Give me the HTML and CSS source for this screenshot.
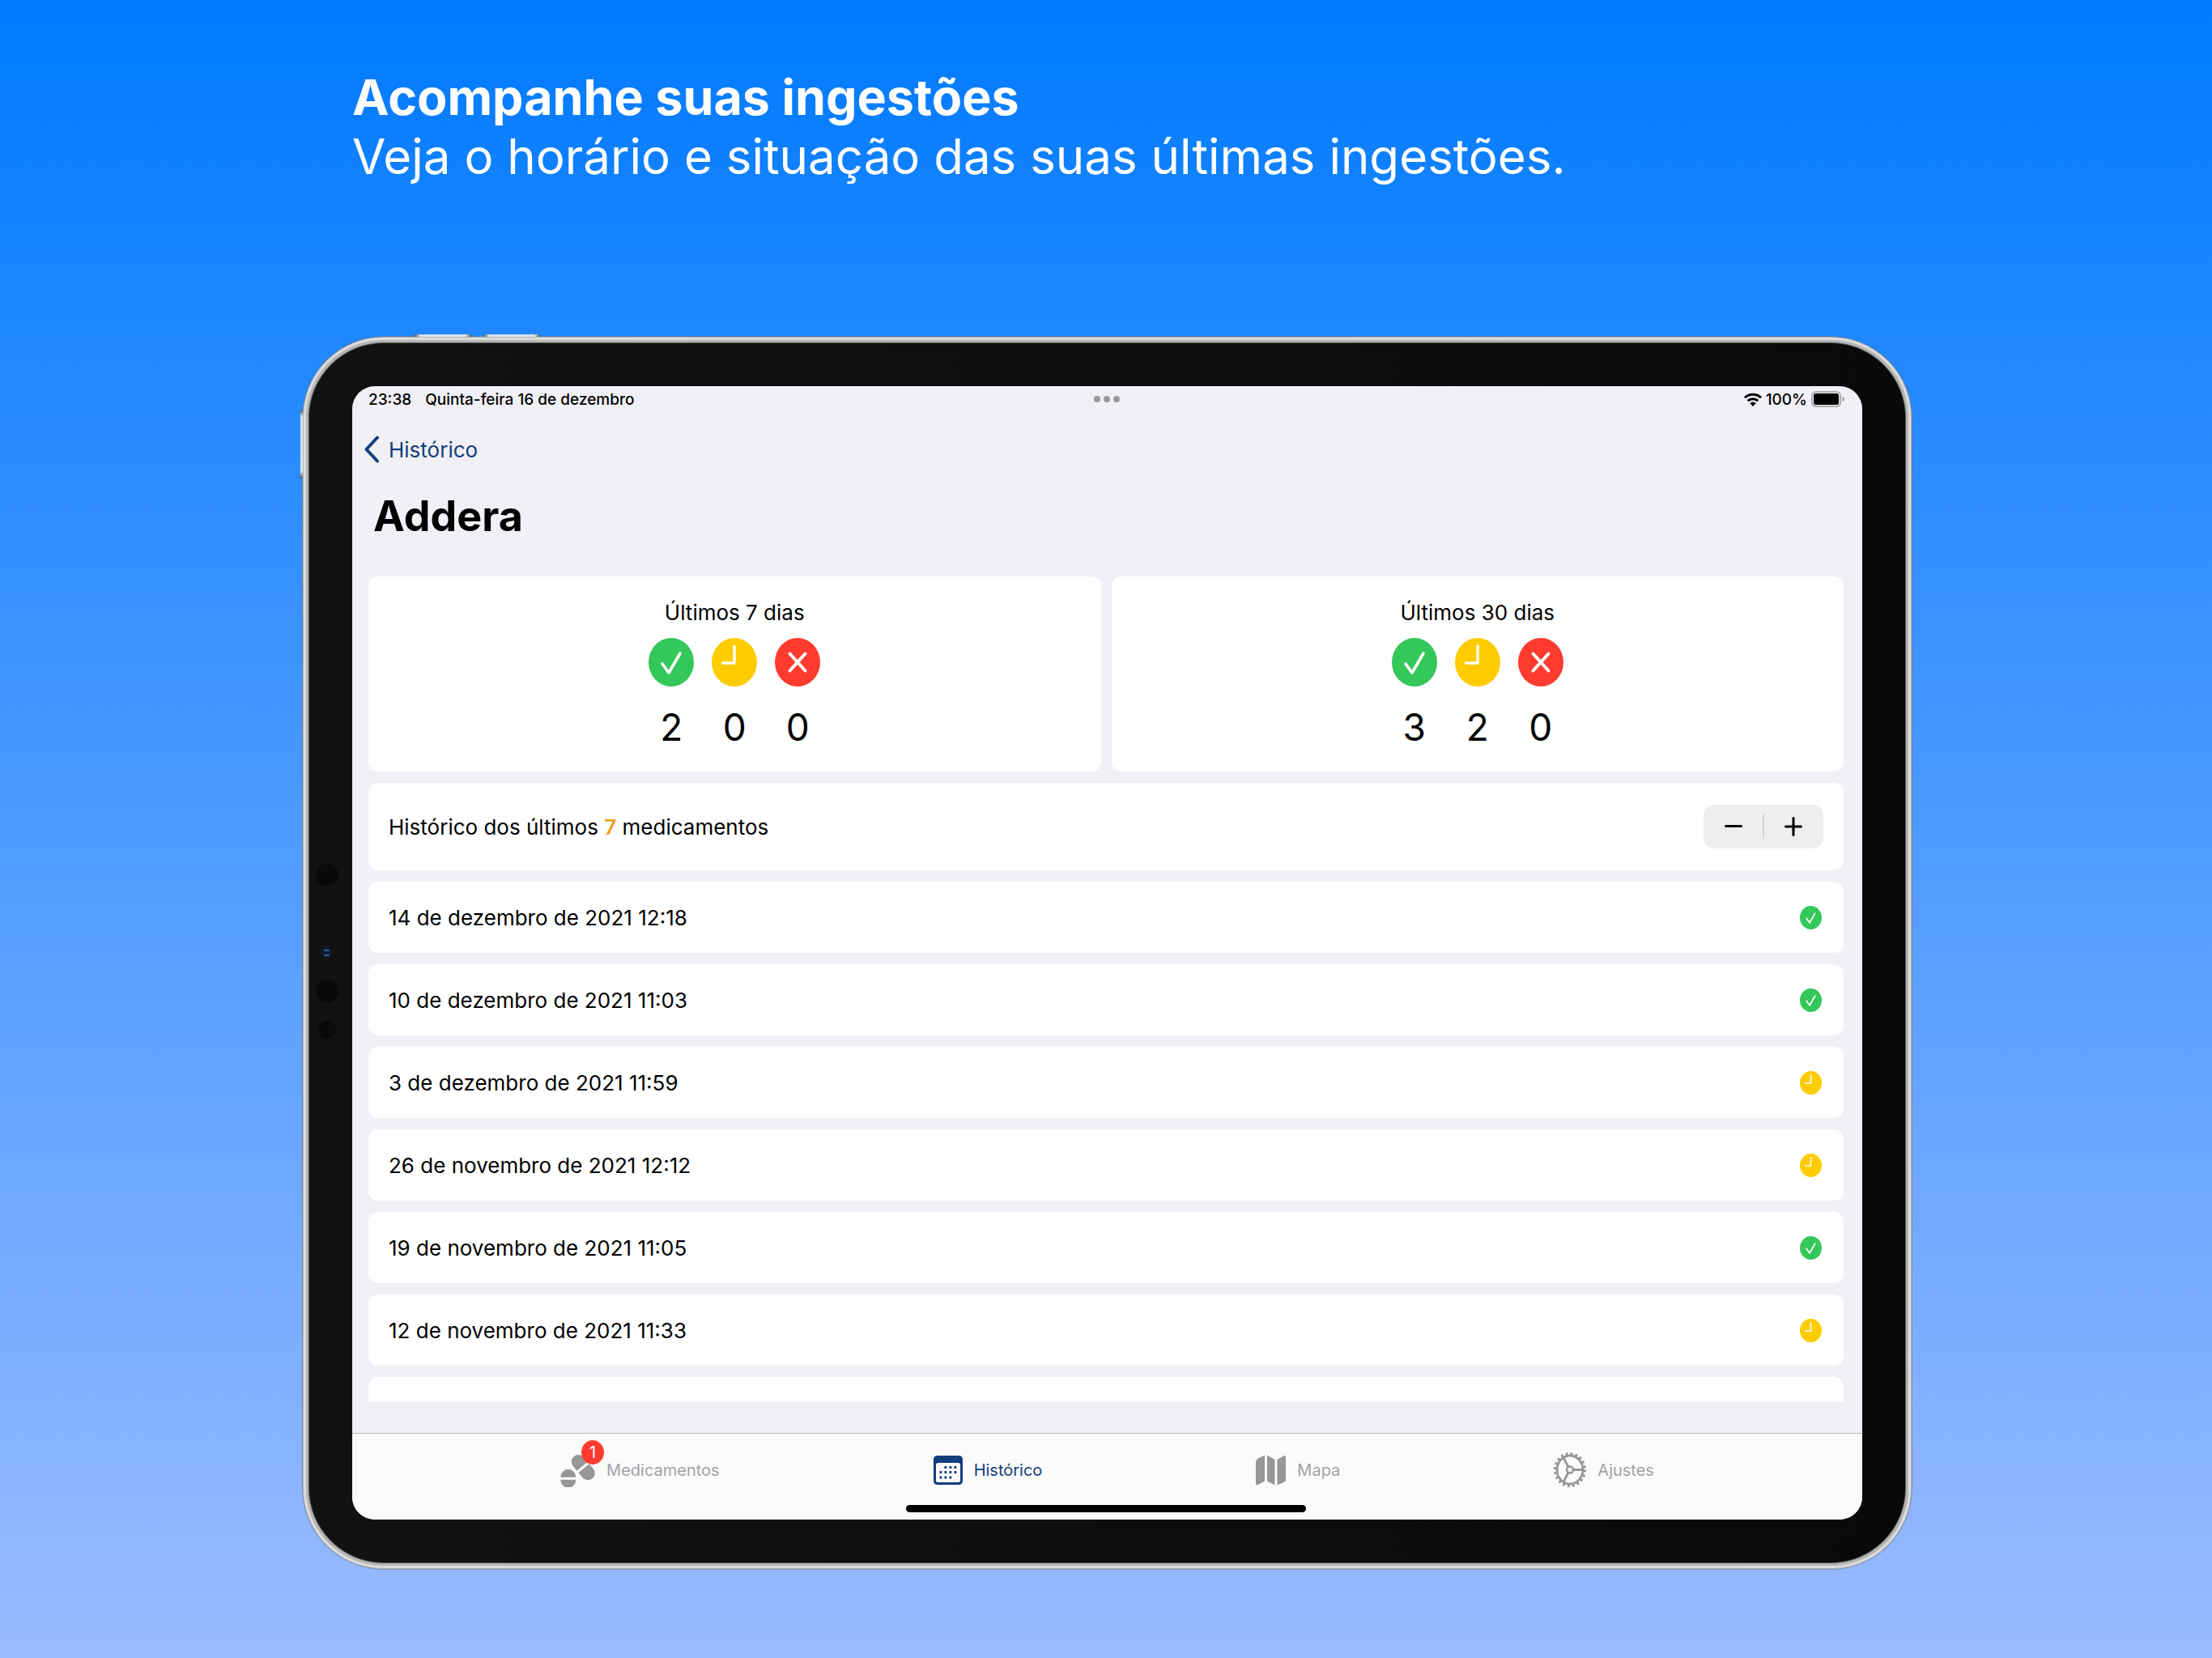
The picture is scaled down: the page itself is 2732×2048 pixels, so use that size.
FILE: index.html
```html
<!DOCTYPE html>
<html lang="pt-BR">
<head>
<meta charset="utf-8">
<meta name="viewport" content="width=device-width, initial-scale=1">
<title>Acompanhe suas ingestões</title>
<link rel="stylesheet" href="styles.css">
</head>
<body>
<svg class="sprite" aria-hidden="true">
  <symbol id="ok" viewBox="0 0 56 60" preserveAspectRatio="none">
    <ellipse cx="28" cy="30" rx="28" ry="30" fill="#34c759"/>
    <path d="M17 32 25 43 39 19" fill="none" stroke="#fff" stroke-width="3.6" stroke-linecap="round" stroke-linejoin="round"/>
  </symbol>
  <symbol id="late" viewBox="0 0 56 60" preserveAspectRatio="none">
    <ellipse cx="28" cy="30" rx="28" ry="30" fill="#ffcc00"/>
    <path d="M28 10V31H13.500" fill="none" stroke="#fff" stroke-width="3.4" stroke-linecap="round" stroke-linejoin="round"/>
  </symbol>
  <symbol id="missed" viewBox="0 0 56 60" preserveAspectRatio="none">
    <ellipse cx="28" cy="30" rx="28" ry="30" fill="#ff3b30"/>
    <path d="M18.500 19.500 37.500 40.500M37.500 19.500 18.500 40.500" fill="none" stroke="#fff" stroke-width="4" stroke-linecap="round"/>
  </symbol>
</svg>
<main class="page">
  <header class="promo">
    <h1>Acompanhe suas ingestões</h1>
    <p>Veja o horário e situação das suas últimas ingestões.</p>
  </header>

  <section class="device">
    <i class="key key-up"></i><i class="key key-down"></i><i class="key key-power"></i>
    <i class="lens lens-a"></i><i class="lens lens-b"></i><i class="lens lens-c"></i><i class="lens lens-d"></i>
    <div class="screen">
      <div class="status">
        <div class="status-left"><span>23:38</span><span>Quinta-feira 16 de dezembro</span></div>
        <div class="dots"><i></i><i></i><i></i></div>
        <div class="status-right">
          <svg width="22" height="17" viewBox="0 0 22 17" aria-hidden="true"><g fill="none" stroke="#000" stroke-width="3"><path d="M1 6.200A14.500 14.500 0 0 1 21 6.200"/><path d="M4.700 10.200A9.200 9.200 0 0 1 17.300 10.200"/></g><path d="M7.200 12.900A5.500 5.500 0 0 1 14.800 12.900L11 17Z"/></svg>
          <span>100%</span>
          <svg width="42" height="20" viewBox="0 0 42 20" aria-hidden="true"><rect x="1" y="1" width="35" height="18" rx="4.500" fill="none" stroke="#9b9b9f" stroke-width="1.600"/><rect x="3" y="3" width="31" height="14" rx="2.500"/><path d="M38.500 6.500Q41 8 41 10T38.500 13.500Z" fill="#9b9b9f"/></svg>
        </div>
      </div>

      <a class="back" href="#historico">
        <svg width="18" height="34" viewBox="0 0 18 34" aria-hidden="true"><path d="M16 2.500 2.500 17 16 31.500" fill="none" stroke="currentColor" stroke-width="4" stroke-linecap="round" stroke-linejoin="round"/></svg>
        <span>Histórico</span>
      </a>
      <h2 class="title">Addera</h2>

      <div class="content">
        <div class="stats">
          <section class="card stat">
            <h3>Últimos 7 dias</h3>
            <div class="counts">
              <div><svg class="big"><use href="#ok"/></svg><b>2</b></div>
              <div><svg class="big"><use href="#late"/></svg><b>0</b></div>
              <div><svg class="big"><use href="#missed"/></svg><b>0</b></div>
            </div>
          </section>
          <section class="card stat">
            <h3>Últimos 30 dias</h3>
            <div class="counts">
              <div><svg class="big"><use href="#ok"/></svg><b>3</b></div>
              <div><svg class="big"><use href="#late"/></svg><b>2</b></div>
              <div><svg class="big"><use href="#missed"/></svg><b>0</b></div>
            </div>
          </section>
        </div>
        <div class="card row filter">
          <span>Histórico dos últimos <em>7</em> medicamentos</span>
          <div class="stepper">
            <button type="button" aria-label="Diminuir"><svg width="22" height="24" viewBox="0 0 22 24"><path d="M1.500 11.500H20.500"/></svg></button>
            <button type="button" aria-label="Aumentar"><svg width="22" height="24" viewBox="0 0 22 24"><path d="M1.500 12H20.500M11 1.500V22.500"/></svg></button>
          </div>
        </div>
        <div class="card row"><span>14 de dezembro de 2021 12:18</span><svg class="small"><use href="#ok"/></svg></div>
        <div class="card row"><span>10 de dezembro de 2021 11:03</span><svg class="small"><use href="#ok"/></svg></div>
        <div class="card row"><span>3 de dezembro de 2021 11:59</span><svg class="small"><use href="#late"/></svg></div>
        <div class="card row"><span>26 de novembro de 2021 12:12</span><svg class="small"><use href="#late"/></svg></div>
        <div class="card row"><span>19 de novembro de 2021 11:05</span><svg class="small"><use href="#ok"/></svg></div>
        <div class="card row"><span>12 de novembro de 2021 11:33</span><svg class="small"><use href="#late"/></svg></div>
        <div class="card row"></div>
      </div>

      <nav class="tabs">
        <a href="#medicamentos">
          <span class="tab-icon">
            <svg width="43" height="42" viewBox="0 0 43 42" fill="#979797"><path d="M.3 29.700A9.500 10 0 0 1 19.300 29.700ZM.3 32.700A9.500 10 0 0 0 19.300 32.700Z"/><path d="M22.300 10.500 34.200 24.800" stroke="#979797" stroke-width="17" stroke-linecap="round"/><path d="M20.500 23.500 35.500 11.500" stroke="#fbfbfc" stroke-width="3"/></svg>
            <span class="badge">1</span>
          </span>
          <span>Medicamentos</span>
        </a>
        <a class="active" href="#historico">
          <svg width="36" height="36" viewBox="0 0 36 36" fill="#133e7c"><path fill-rule="evenodd" d="M5 0H31Q36 0 36 5V31Q36 36 31 36H5Q0 36 0 31V5Q0 0 5 0ZM5.500 9Q3 9 3 11.500V30.500Q3 33 5.500 33H30.500Q33 33 33 30.500V11.500Q33 9 30.500 9Z"/><path d="M13.500 14.500H28.500M7.500 20.500H28.500M7.500 27H22.500" fill="none" stroke="#133e7c" stroke-width="2.800" stroke-dasharray="2.800 3.200"/></svg>
          <span>Histórico</span>
        </a>
        <a href="#mapa">
          <svg width="37" height="38" viewBox="0 0 37 38" fill="#979797"><path d="M0 8.500Q0 6.500 2 5L11 .5V32.500L3 37Q0 38 0 35ZM14 .5 23.500 6V37.500L14 32.500ZM26.500 6 34 1.500Q37 0 37 3V31Q37 32.500 35.500 33.500L26.500 37.500Z"/></svg>
          <span>Mapa</span>
        </a>
        <a href="#ajustes">
          <svg width="40" height="43" viewBox="0 0 40 43" fill="none" stroke="#979797"><ellipse cx="20" cy="21.500" rx="18.500" ry="20" stroke-width="3" stroke-dasharray="3 3.050"/><ellipse cx="20" cy="21.500" rx="16" ry="17.500" stroke-width="2.800"/><circle cx="20" cy="21.500" r="4" stroke-width="2.400"/><path d="M24 21.500H36M18 18 12 6.500M18 25 12 36.500" stroke-width="2.800"/></svg>
          <span>Ajustes</span>
        </a>
      </nav>
      <i class="home"></i>
    </div>
  </section>
</main>
</body>
</html>
```
FILE: styles.css
```css
* { box-sizing: border-box; }

body {
  margin: 0;
  font-family: Inter, "Liberation Sans", sans-serif;
  color: #000;
}

h1, h2, h3, p { margin: 0; font-weight: 400; }
a { text-decoration: none; }
svg { display: block; flex: none; }
.sprite { position: absolute; width: 0; height: 0; }

.page {
  display: flex;
  flex-direction: column;
  height: 100vh;
  min-height: 1400px;
  padding: 84px 371px 110px 374px;
  background: linear-gradient(#007aff, #9bbbff);
}

.promo {
  height: 332px;
  flex: none;
  padding-left: 61px;
  color: #fff;
  font-size: 60px;
  line-height: 73px;
}
.promo h1 { font-size: 61px; font-weight: 700; }

/* Tablet body: metal rim, black bezel, then the screen */
.device {
  position: relative;
  display: flex;
  flex: 1;
  min-height: 0;
  padding: 54px;
  border: 7px solid #b4b5b3;
  border-radius: 100px;
  background: linear-gradient(90deg, #121212, #090909);
  background-clip: padding-box;
  box-shadow: inset 0 0 0 1px #555, 0 0 0 1px rgba(110, 120, 130, .6);
}
.device::before {
  content: "";
  position: absolute;
  inset: -6px;
  border: 3px solid #dcdddb;
  border-radius: 98px;
}

.key {
  position: absolute;
  background: linear-gradient(90deg, #555, #d8e2ea 10%, #d8e2ea 90%, #555);
}
.key-up, .key-down { top: -10px; width: 70px; height: 3px; }
.key-up { left: 131px; }
.key-down { left: 216px; }
.key-power {
  top: 83px;
  left: -10px;
  width: 3px;
  height: 85px;
  background: linear-gradient(#555, #d8e2ea 10%, #d8e2ea 90%, #555);
}
.lens { position: absolute; border-radius: 50%; background: #090909; }
.lens-a { left: 9px; top: 644px; width: 28px; height: 28px; }
.lens-b { left: 15px; top: 746px; width: 15px; height: 15px; background: radial-gradient(#0b1c33 30%, #10161f 60%, #1b1d20); }
.lens-b::before, .lens-b::after {
  content: "";
  position: absolute;
  left: 4px;
  width: 7px;
  height: 2px;
  border-radius: 1px;
  background: #2c6395;
}
.lens-b::before { top: 4px; }
.lens-b::after { top: 10px; }
.lens-c { left: 9px; top: 787px; width: 28px; height: 28px; }
.lens-d { left: 12px; top: 838px; width: 22px; height: 22px; }

.screen {
  position: relative;
  display: flex;
  flex: 1;
  flex-direction: column;
  min-width: 0;
  overflow: hidden;
  border-radius: 28px;
  background: #f1f0f6;
}

.status {
  display: grid;
  grid-template-columns: 1fr auto 1fr;
  align-items: center;
  height: 32px;
  flex: none;
  padding: 0 21px 0 20px;
  font-size: 19px;
  font-weight: 500;
}
.status-left { display: flex; gap: 17px; }
.status-right { display: flex; align-items: center; justify-content: flex-end; gap: 5px; }
.dots { display: flex; gap: 4px; }
.dots i { width: 8px; height: 8px; border-radius: 50%; background: #98989c; }

.back {
  display: flex;
  align-items: center;
  align-self: flex-start;
  gap: 12px;
  height: 64px;
  margin-top: 14px;
  padding-left: 15px;
  color: #133e7c;
  font-size: 26px;
}
.title {
  padding: 17px 26px 0;
  font-size: 52px;
  font-weight: 700;
  line-height: 68px;
}

.content {
  display: flex;
  flex: 1;
  flex-direction: column;
  gap: 14px;
  min-height: 0;
  margin: 40px 23px 39px 20px;
  overflow: hidden;
  font-size: 26px;
}
.card { flex: none; border-radius: 12px; background: #fff; }
.stats { display: grid; grid-template-columns: 1fr 1fr; gap: 13px; flex: none; }
.stat {
  display: flex;
  flex-direction: column;
  align-items: center;
  height: 241px;
  padding-top: 28px;
}
.stat h3 { font-size: 26px; line-height: 34px; }
.counts { display: flex; gap: 22px; margin-top: 14px; }
.counts div { display: flex; flex-direction: column; align-items: center; gap: 22px; }
.counts b { font-size: 46px; font-weight: 400; line-height: 56px; }
.big { width: 56px; height: 60px; }
.small { width: 27px; height: 29px; }

.row {
  display: flex;
  align-items: center;
  justify-content: space-between;
  height: 88px;
  padding: 0 27px 0 25px;
}
.filter { height: 108px; padding-right: 25px; }
.filter em { color: #f0a01e; font-style: normal; font-weight: 600; }

.stepper {
  position: relative;
  display: flex;
  width: 148px;
  height: 54px;
  border-radius: 13px;
  background: #eeeeef;
}
.stepper::after {
  content: "";
  position: absolute;
  top: 12px;
  left: 73px;
  width: 2px;
  height: 30px;
  background: #d5d5d7;
}
.stepper button {
  display: flex;
  flex: 1;
  align-items: center;
  justify-content: center;
  padding: 0;
  border: 0;
  background: none;
}
.stepper path { fill: none; stroke: #000; stroke-width: 3; stroke-linecap: round; }

.tabs {
  display: flex;
  flex: none;
  justify-content: center;
  gap: 264px;
  height: 107px;
  padding-bottom: 17px;
  border-top: 1px solid #b9b9bd;
  background: #fbfbfc;
  font-size: 20px;
}
.tabs a { display: flex; align-items: center; gap: 14px; color: #a2a2a4; }
.tabs .active { color: #133e7c; }
.tab-icon { position: relative; }
.badge {
  position: absolute;
  top: -16px;
  left: 26px;
  width: 28px;
  height: 30px;
  border-radius: 50%;
  background: #ff3b30;
  color: #fff;
  font-size: 20px;
  line-height: 30px;
  text-align: center;
}
.home {
  position: absolute;
  bottom: 9px;
  left: 50%;
  width: 494px;
  height: 9px;
  margin-left: -249px;
  border-radius: 5px;
  background: #000;
}
```
